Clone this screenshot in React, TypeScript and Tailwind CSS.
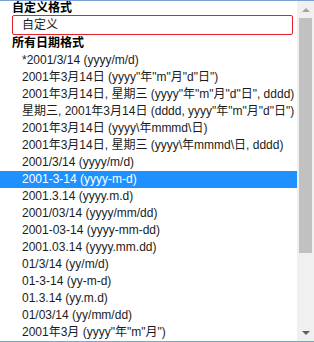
import React from "react";

const items = [
  "*2001/3/14 (yyyy/m/d)",
  "2001年3月14日 (yyyy\"年\"m\"月\"d\"日\")",
  "2001年3月14日, 星期三 (yyyy\"年\"m\"月\"d\"日\", dddd)",
  "星期三, 2001年3月14日 (dddd, yyyy\"年\"m\"月\"d\"日\")",
  "2001年3月14日 (yyyy\\年mmmd\\日)",
  "2001年3月14日, 星期三 (yyyy\\年mmmd\\日, dddd)",
  "2001/3/14 (yyyy/m/d)",
  "2001-3-14 (yyyy-m-d)",
  "2001.3.14 (yyyy.m.d)",
  "2001/03/14 (yyyy/mm/dd)",
  "2001-03-14 (yyyy-mm-dd)",
  "2001.03.14 (yyyy.mm.dd)",
  "01/3/14 (yy/m/d)",
  "01-3-14 (yy-m-d)",
  "01.3.14 (yy.m.d)",
  "01/03/14 (yy/mm/dd)",
  "2001年3月 (yyyy\"年\"m\"月\")",
];

export default function App() {
  return (
    <div className="relative w-[314px] h-[342px] overflow-hidden bg-white border-t border-b border-[#7ea0d6] text-[12px] text-[#1c1c1c] font-['Liberation_Sans','Noto_Sans_CJK_SC',sans-serif]">
      <div className="flex h-full">
        <div className="flex-1 flex flex-col overflow-hidden">
          <div className="h-[14px] leading-[14px] pl-[12px] font-bold text-black">自定义格式</div>
          <div className="ml-[12px] mr-[4px] h-[20px] border border-[#e8202a] rounded-[2px] flex items-center pl-[9px] leading-[18px]">
            自定义
          </div>
          <div className="h-[17px] leading-[17px] pl-[12px] font-bold text-black">所有日期格式</div>
          <div className="flex flex-col">
            {items.map((t, i) => (
              <div
                key={i}
                className={
                  "h-[17px] leading-[17px] pl-[22px] whitespace-nowrap " +
                  (i === 7 ? "bg-[#1e90ff] text-white" : "")
                }
              >
                {t}
              </div>
            ))}
          </div>
        </div>
        <div className="w-[17px] h-full bg-[#f0f0f0] flex flex-col items-center">
          <div className="h-[17px] w-full flex items-center justify-center">
            <div className="w-0 h-0 border-l-[4px] border-r-[4px] border-b-[4px] border-l-transparent border-r-transparent border-b-[#a3a3a3]" />
          </div>
          <div className="w-[13px] h-[235px] bg-[#c1c1c1]" />
          <div className="flex-1" />
          <div className="h-[17px] w-full flex items-center justify-center">
            <div className="w-0 h-0 border-l-[4px] border-r-[4px] border-t-[4px] border-l-transparent border-r-transparent border-t-[#606060]" />
          </div>
        </div>
      </div>
    </div>
  );
}
